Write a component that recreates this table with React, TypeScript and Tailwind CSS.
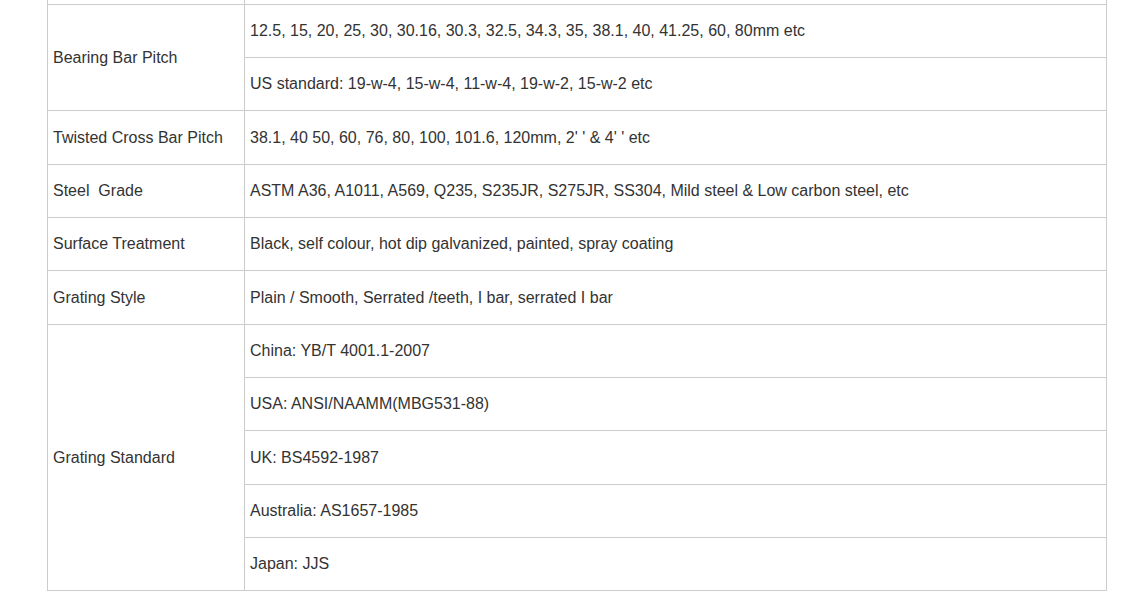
import React from "react";

type Sub = { text: string; h: string };
type Group = { label: string; rows: Sub[] };

const groups: Group[] = [
  {
    label: "Bearing Bar Pitch",
    rows: [
      { text: "12.5, 15, 20, 25, 30, 30.16, 30.3, 32.5, 34.3, 35, 38.1, 40, 41.25, 60, 80mm etc", h: "h-[53px]" },
      { text: "US standard: 19-w-4, 15-w-4, 11-w-4, 19-w-2, 15-w-2 etc", h: "h-[53px]" },
    ],
  },
  {
    label: "Twisted Cross Bar Pitch",
    rows: [{ text: "38.1, 40 50, 60, 76, 80, 100, 101.6, 120mm, 2' ' & 4' ' etc", h: "h-[54px]" }],
  },
  {
    label: "Steel\u00a0 Grade",
    rows: [{ text: "ASTM A36, A1011, A569, Q235, S235JR, S275JR, SS304, Mild steel & Low carbon steel, etc", h: "h-[53px]" }],
  },
  {
    label: "Surface Treatment",
    rows: [{ text: "Black, self colour, hot dip galvanized, painted, spray coating", h: "h-[53px]" }],
  },
  {
    label: "Grating Style",
    rows: [{ text: "Plain / Smooth, Serrated /teeth, I bar, serrated I bar", h: "h-[54px]" }],
  },
  {
    label: "Grating Standard",
    rows: [
      { text: "China: YB/T 4001.1-2007", h: "h-[53px]" },
      { text: "USA: ANSI/NAAMM(MBG531-88)", h: "h-[53px]" },
      { text: "UK: BS4592-1987", h: "h-[54px]" },
      { text: "Australia: AS1657-1985", h: "h-[53px]" },
      { text: "Japan: JJS", h: "h-[53px]" },
    ],
  },
];

export default function App() {
  return (
    <div
      className="w-[1147px] h-[608px] bg-white overflow-hidden text-[16px] text-[#333333]"
      style={{ fontFamily: '"Liberation Sans", Arial, sans-serif' }}
    >
      <div className="ml-[47px] w-[1060px] border-x border-b border-[#cccccc]">
        <div className="flex h-[4px]">
          <div className="w-[196px]" />
          <div className="flex-1 border-l border-[#cccccc]" />
        </div>
        {groups.map((g, i) => (
          <div key={i} className="flex">
            <div className="w-[196px] border-t border-[#cccccc] flex items-center pl-[5px]">
              {g.label}
            </div>
            <div className="flex-1 border-l border-[#cccccc] flex flex-col">
              {g.rows.map((r, j) => (
                <div
                  key={j}
                  className={`${r.h} border-t border-[#cccccc] flex items-center pl-[5px]`}
                >
                  {r.text}
                </div>
              ))}
            </div>
          </div>
        ))}
      </div>
    </div>
  );
}
